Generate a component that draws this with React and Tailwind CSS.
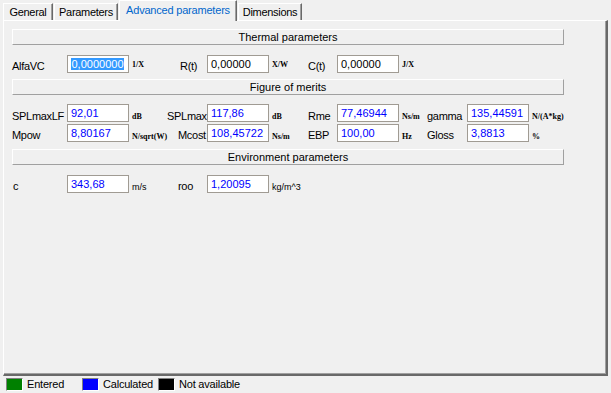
import React from 'react';

const tabs = [
  { label: 'General', w: 'w-[50px]' },
  { label: 'Parameters', w: 'w-[64px]' },
  { label: 'Advanced parameters', w: 'w-[118px]', active: true },
  { label: 'Dimensions', w: 'w-[64px]' },
];

function Tab({ label, w, active }) {
  if (active) {
    return (
      <div
        className={`${w} h-[21px] -mb-[1px] relative z-10 bg-[#f0f0f0] border-l border-t border-white border-r border-r-[#696969] shadow-[inset_-1px_0_0_#a0a0a0] pt-[1px] text-center tracking-[-0.2px] text-[#0066cc] leading-[16px] whitespace-nowrap`}
      >
        {label}
      </div>
    );
  }
  return (
    <div
      className={`${w} h-[17px] bg-[#f0f0f0] border-l border-t border-white border-r border-r-[#696969] shadow-[inset_-1px_0_0_#a0a0a0] text-center tracking-[-0.3px] leading-[16px] whitespace-nowrap`}
    >
      {label}
    </div>
  );
}

function Header({ children }) {
  return (
    <div className="w-[552px] h-[16px] border-l border-t border-white border-r border-b border-r-[#a0a0a0] border-b-[#a0a0a0] flex items-center justify-center leading-none">
      {children}
    </div>
  );
}

function Label({ children, w, indent = '', pt = 'pt-[4px]' }) {
  return (
    <div className={`${w} ${indent} ${pt} h-[18px] leading-[15px] tracking-[-0.3px] whitespace-nowrap`}>
      {children}
    </div>
  );
}

function Field({ value, tone = 'blue', selected }) {
  return (
    <div className="w-[62px] h-[18px] shrink-0 bg-white border border-[#a09b93] flex items-center pl-[3px] leading-none">
      {selected ? (
        <span className="bg-[#3399ff] text-white h-[12px] leading-[12px] px-[0.5px]">{value}</span>
      ) : (
        <span className={tone === 'blue' ? 'text-[#0000ff]' : 'text-black'}>{value}</span>
      )}
    </div>
  );
}

function Unit({ children, w, plain, pt = 'pt-[8px]' }) {
  return (
    <div
      className={`${w} ${pt} h-[18px] pl-[3px] leading-[10px] whitespace-nowrap ${
        plain ? 'text-[9px]' : "text-[8px] font-bold font-['Liberation_Serif',serif]"
      }`}
    >
      {children}
    </div>
  );
}

function Swatch({ color, label, w }) {
  return (
    <div className={`${w} flex items-center gap-[4px]`}>
      <span className={`w-[17px] h-[13px] shrink-0 ${color} border border-[#808080] border-r-white border-b-white`} />
      <span className="tracking-[-0.2px]">{label}</span>
    </div>
  );
}

export default function App() {
  return (
    <div className="w-[611px] h-[393px] bg-[#f0f0f0] font-['Liberation_Sans',Arial,sans-serif] text-[11px] text-black flex flex-col overflow-hidden">
      <div className="h-[20px] flex items-end pl-[3px] gap-[1px] relative z-10">
        {tabs.map((t) => (
          <Tab key={t.label} {...t} />
        ))}
      </div>

      <div className="ml-[3px] w-[605px] h-[356px] border-l border-t border-white border-r-2 border-b-2 border-r-[#696969] border-b-[#696969] shadow-[inset_-1px_-1px_0_#a0a0a0] pl-[8px] pt-[8px] flex flex-col">
        <Header>Thermal parameters</Header>

        <div className="flex mt-[10px]">
          <Label w="w-[55px]">AlfaVC</Label>
          <Field value="0,0000000" selected />
          <Unit w="w-[40px]" pt="pt-[5px]">1/X</Unit>
          <Label w="w-[38px]" indent="pl-[11px]">R(t)</Label>
          <Field value="0,00000" tone="black" />
          <Unit w="w-[39px]" pt="pt-[5px]">X/W</Unit>
          <Label w="w-[29px]">C(t)</Label>
          <Field value="0,00000" tone="black" />
          <Unit w="w-[28px]" pt="pt-[5px]">J/X</Unit>
        </div>

        <div className="mt-[6px]">
          <Header>Figure of merits</Header>
        </div>

        <div className="flex mt-[9px]">
          <Label w="w-[55px]" pt="pt-[5px]">SPLmaxLF</Label>
          <Field value="92,01" />
          <Unit w="w-[38px]">dB</Unit>
          <Label w="w-[40px]" pt="pt-[5px]">SPLmax</Label>
          <Field value="117,86" />
          <Unit w="w-[39px]">dB</Unit>
          <Label w="w-[29px]" pt="pt-[5px]">Rme</Label>
          <Field value="77,46944" />
          <Unit w="w-[28px]">Ns/m</Unit>
          <Label w="w-[40px]" pt="pt-[5px]">gamma</Label>
          <Field value="135,44591" />
          <Unit w="w-[60px]">N/(A*kg)</Unit>
        </div>

        <div className="flex mt-[2px]">
          <Label w="w-[55px]">Mpow</Label>
          <Field value="8,80167" />
          <Unit w="w-[49px]">N/sqrt(W)</Unit>
          <Label w="w-[29px]">Mcost</Label>
          <Field value="108,45722" />
          <Unit w="w-[39px]">Ns/m</Unit>
          <Label w="w-[29px]">EBP</Label>
          <Field value="100,00" />
          <Unit w="w-[28px]">Hz</Unit>
          <Label w="w-[40px]">Gloss</Label>
          <Field value="3,8813" />
          <Unit w="w-[30px]">%</Unit>
        </div>

        <div className="mt-[7px]">
          <Header>Environment parameters</Header>
        </div>

        <div className="flex mt-[10px]">
          <Label w="w-[55px]" indent="pl-[1px]">c</Label>
          <Field value="343,68" />
          <Unit w="w-[39px]" plain pt="pt-[7px]">m/s</Unit>
          <Label w="w-[39px]" indent="pl-[10px]">roo</Label>
          <Field value="1,20095" />
          <Unit w="w-[60px]" plain pt="pt-[7px]">kg/m^3</Unit>
        </div>
      </div>

      <div className="h-[17px] flex items-center pl-[6px]">
        <Swatch color="bg-[#008000]" label="Entered" w="w-[76px]" />
        <Swatch color="bg-[#0000ff]" label="Calculated" w="w-[76px]" />
        <Swatch color="bg-black" label="Not available" w="w-[100px]" />
      </div>
    </div>
  );
}
